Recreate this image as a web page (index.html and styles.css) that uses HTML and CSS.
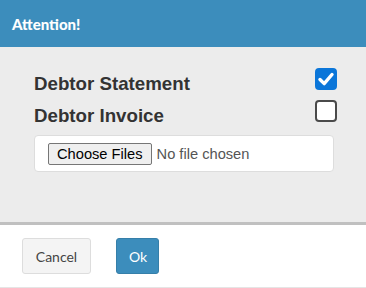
FILE: index.html
```html
<!DOCTYPE html>
<html lang="en">
<head>
<meta charset="UTF-8">
<meta name="viewport" content="width=device-width, initial-scale=1.0">
<title>Attention</title>
<link rel="stylesheet" href="styles.css">
</head>
<body>
<div class="modal">
  <div class="modal-header">Attention!</div>
  <div class="modal-body">
    <div class="row">
      <span class="row-label">Debtor Statement</span>
      <span class="check checked">
        <svg width="22" height="22" viewBox="0 0 22 22"><path d="M5 11.5 L9.2 15.6 L17 6.5" fill="none" stroke="#fff" stroke-width="3.4" stroke-linecap="round" stroke-linejoin="round"/></svg>
      </span>
    </div>
    <div class="row">
      <span class="row-label">Debtor Invoice</span>
      <span class="check"></span>
    </div>
    <div class="file-box">
      <span class="file-btn">Choose Files</span>
      <span class="file-name">No file chosen</span>
    </div>
  </div>
  <div class="modal-footer">
    <button class="btn btn-default">Cancel</button>
    <button class="btn btn-primary">Ok</button>
  </div>
</div>
</body>
</html>
```

FILE: styles.css
```css
body {
  margin: 0;
  font-family: Lato, "Liberation Sans", sans-serif;
  background: #fff;
}

.modal {
  width: 366px;
  height: 288px;
  display: flex;
  flex-direction: column;
}

/* header */
.modal-header {
  height: 47px;
  box-sizing: border-box;
  background: #3c8dbc;
  color: #fff;
  font-weight: 900;
  font-size: 15px;
  padding: 15px 0 0 12px;
}

/* body */
.modal-body {
  background: #ececec;
  padding: 21px 29px 50px 34px;
  border-bottom: 3px solid #c0c0c0;
}

.row {
  display: flex;
  justify-content: space-between;
  align-items: flex-start;
  height: 32px;
}

.row-label {
  font-family: "Liberation Sans", Arial, sans-serif;
  font-weight: bold;
  font-size: 18.72px;
  color: #333;
  margin-top: 5px;
}

.check {
  width: 22px;
  height: 22px;
  box-sizing: border-box;
  border: 2px solid #4a4a4a;
  border-radius: 4px;
  background: #fff;
  position: relative;
}

.check.checked {
  background: #0b76d9;
  border-color: #0b76d9;
}

.check svg {
  position: absolute;
  left: -2px;
  top: -2px;
}

.file-box {
  margin-top: 3px;
  margin-right: 3px;
  height: 37px;
  box-sizing: border-box;
  background: #fff;
  border: 1px solid #ddd;
  border-radius: 4px;
  display: flex;
  align-items: center;
  padding-left: 13px;
  font-family: "Liberation Sans", Arial, sans-serif;
  font-size: 14.67px;
}

.file-btn {
  height: 22px;
  box-sizing: border-box;
  padding: 1px 8px;
  background: #efefef;
  border: 1px solid #767676;
  border-radius: 2px;
  color: #000;
  line-height: 18px;
}

.file-name {
  margin-left: 5px;
  color: #555;
}

/* footer */
.modal-footer {
  flex: 1;
  display: flex;
  align-items: center;
  gap: 25px;
  padding-left: 22px;
  border-bottom: 1px solid #e5e5e5;
}

.btn {
  height: 36px;
  box-sizing: border-box;
  border-radius: 3px;
  font-family: Lato, sans-serif;
  font-size: 14px;
  padding: 0 12px;
}

.btn-default {
  background: #f4f4f4;
  border: 1px solid #ddd;
  color: #444;
  width: 69px;
}

.btn-primary {
  background: #3c8dbc;
  border: 1px solid #367fa9;
  color: #fff;
  width: 43px;
}
```
